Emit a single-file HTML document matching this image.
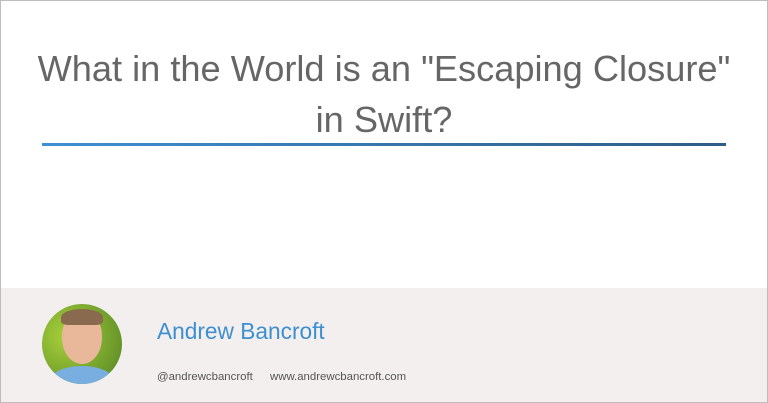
<!DOCTYPE html>
<html><head><style>
body{margin:0;width:768px;height:403px;overflow:hidden;font-family:"Liberation Sans",sans-serif;background:#fff}
.frame{position:absolute;left:0;top:0;width:766px;height:401px;border:1px solid #bdbdbd;}
h1{position:absolute;left:0;width:768px;top:43px;margin:0;text-align:center;font-weight:normal;font-size:36.2px;line-height:51px;color:#666}
.line{position:absolute;left:42px;top:143px;width:684px;height:3px;background:linear-gradient(90deg,#3f8fd4,#2e5d86)}
.foot{position:absolute;left:1px;top:288px;width:766px;height:114px;background:#f4efef}
.av{position:absolute;left:42px;top:304px;width:80px;height:80px;border-radius:50%;overflow:hidden;background:radial-gradient(circle at 30% 40%,#a8d03a,#6c9a2a 70%,#4e7a20)}
.face{position:absolute;left:20px;top:8px;width:40px;height:52px;border-radius:45% 45% 50% 50%;background:#e9b79a}
.hair{position:absolute;left:19px;top:5px;width:42px;height:16px;border-radius:50% 50% 20% 20%;background:#8a6a4e}
.shirt{position:absolute;left:8px;top:62px;width:64px;height:30px;border-radius:50% 50% 0 0;background:#78aee0}
.name{position:absolute;left:157px;top:318px;font-size:22.7px;color:#3d8fcf}
.small{position:absolute;top:371px;font-size:11.4px;color:#555}
</style></head><body>
<div class="frame"></div>
<h1>What in the World is an "Escaping Closure"<br>in Swift?</h1>
<div class="line"></div>
<div class="foot"></div>
<div class="av"><div class="shirt"></div><div class="face"></div><div class="hair"></div></div>
<div class="name">Andrew Bancroft</div>
<div class="small" style="left:157px">@andrewcbancroft</div>
<div class="small" style="left:270px">www.andrewcbancroft.com</div>
</body></html>
